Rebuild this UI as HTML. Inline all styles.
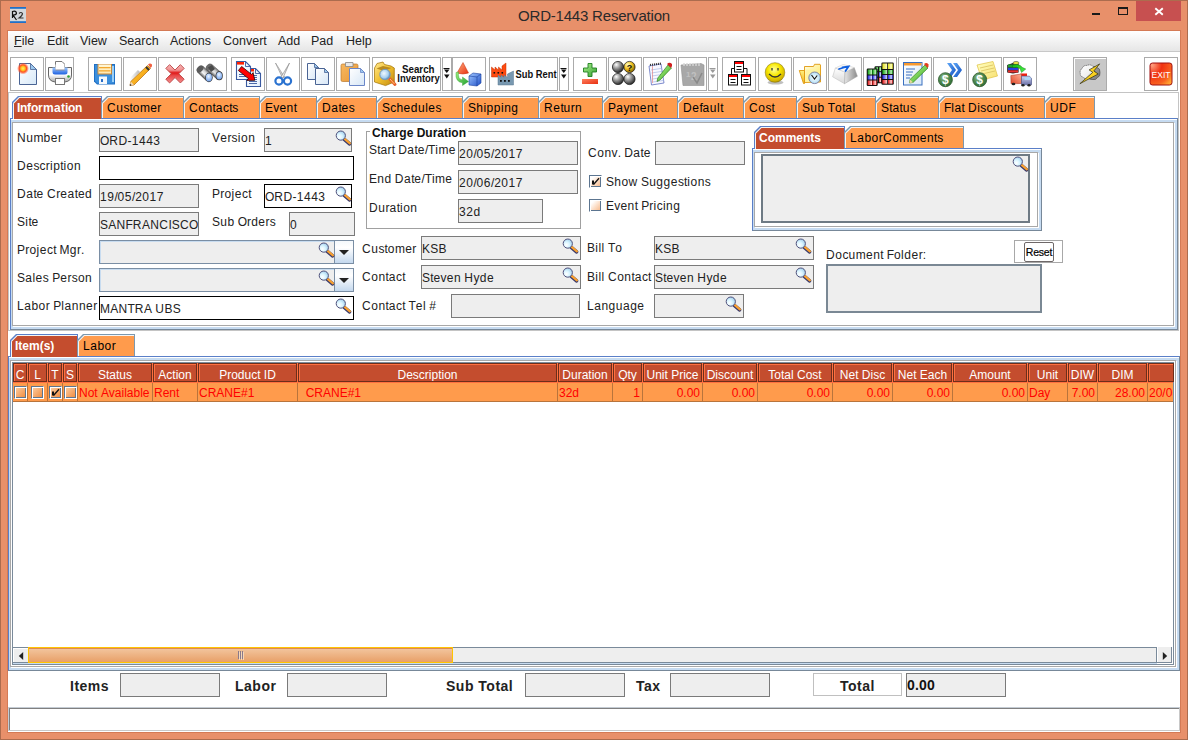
<!DOCTYPE html><html><head><meta charset="utf-8"><style>
*{margin:0;padding:0;box-sizing:border-box}
html,body{width:1188px;height:740px;overflow:hidden}
body{position:relative;background:#E8906A;font-family:"Liberation Sans",sans-serif;font-size:12px;color:#000}
.a{position:absolute}
svg{display:block}
.frame{left:0;top:0;width:1188px;height:740px;border:1px solid #AC6C4E}
.title{left:0;top:7px;width:1188px;text-align:center;font-size:15px;color:#2A2A2A;line-height:18px;letter-spacing:-0.2px}
.content{left:8px;top:31px;width:1172px;height:701px;background:#fff;box-shadow:0 0 0 1px #D47A55}
.menubar{left:8px;top:31px;width:1172px;height:21px;background:linear-gradient(#fff,#E6E6E6);border-bottom:1px solid #C8C8C8}
.mi{position:absolute;top:33px;font-size:12.5px;color:#222;line-height:16px}
.tb{position:absolute;top:57px;height:34px;border:1px solid #ABABAB;background:#fff}
.tb svg{position:absolute;left:-1px;top:-1px}
.l{position:absolute;font-size:12px;color:#222;line-height:14px;white-space:nowrap}
.f{position:absolute;border:1px solid #7A7A7A;background:#EEEEEE;font-size:12px;line-height:23px;padding-left:0px;color:#222;white-space:nowrap;overflow:hidden}
.fw{background:#fff;border-color:#000}
.fb{border-color:#7A8EA4;box-shadow:inset 1px 1px 0 #C8DCF0}
.tt{position:absolute;font-size:12px;line-height:14px;white-space:nowrap}
.th{position:absolute;top:363px;height:19px;background:#C44D2E;border:1px solid #6E2E1A;box-shadow:inset 1px 1px 0 #FF7040;color:#fff;font-size:12px;line-height:20px;padding-top:1px;text-align:center;white-space:nowrap;overflow:hidden}
.td{position:absolute;top:383px;height:18px;color:#FF0000;font-size:12px;line-height:20px;white-space:nowrap;overflow:hidden}
.cb{position:absolute;top:386px;width:13px;height:13px;border:1px solid #5C7590;border-right-color:#fff;border-bottom-color:#fff;box-shadow:inset 1px 1px 0 #fff,inset -1px -1px 0 #5C7590;background:linear-gradient(135deg,#FCD0A8,#F08838)}
.tot{position:absolute;font-weight:bold;font-size:13px;color:#222;line-height:16px;white-space:nowrap}
</style></head><body>
<div class="a frame"></div>
<div class="a title">ORD-1443 Reservation</div>
<div class="a" style="left:1136px;top:1px;width:45px;height:20px;background:#C75050"></div>
<svg class="a" style="left:0;top:0" width="1188" height="30"><rect x="1092" y="13" width="8" height="2" fill="#1A1A1A"/><rect x="1118.5" y="7.5" width="9" height="7" fill="none" stroke="#1A1A1A" stroke-width="1"/><rect x="1118" y="7" width="10" height="2" fill="#1A1A1A"/><path d="M1155.3 8.2 L1162.8 14.8 M1162.8 8.2 L1155.3 14.8" stroke="#fff" stroke-width="1.9"/></svg>
<svg class="a" style="left:10px;top:7px" width="16" height="16"><rect x="0" y="0" width="16" height="16" fill="#D4D8DC"/><rect x="0" y="0" width="16" height="1.8" fill="#2070C8"/><rect x="0" y="14.2" width="16" height="1.8" fill="#2070C8"/><path d="M2.5 4 V11 M2.5 4.5 Q6 3.5 6.5 6 Q6.5 8 3 8 L6.5 13" stroke="#111" stroke-width="1.2" fill="none"/><path d="M9 6.5 Q11 4.5 12.5 6.5 Q12.5 8.5 9 11 H13.5" stroke="#333" stroke-width="1.1" fill="none"/></svg>
<div class="a content"></div>
<div class="a menubar"></div>
<div class="mi" style="left:14px"><u>F</u>ile</div>
<div class="mi" style="left:47px">Edit</div>
<div class="mi" style="left:80px">View</div>
<div class="mi" style="left:119px">Search</div>
<div class="mi" style="left:170px">Actions</div>
<div class="mi" style="left:223px">Convert</div>
<div class="mi" style="left:278px">Add</div>
<div class="mi" style="left:311px">Pad</div>
<div class="mi" style="left:346px">Help</div>
<div class="tb" style="left:10px;width:34px;background:#fff"><svg width="34" height="34" viewBox="0 0 34 34"><defs><linearGradient id="g0" x1="0" y1="0" x2="1" y2="1"><stop offset="0" stop-color="#FFFFFF"/><stop offset="1" stop-color="#D6E8F8"/></linearGradient><radialGradient id="s0" cx="0.5" cy="0.5" r="0.5"><stop offset="0" stop-color="#FFF060"/><stop offset="0.35" stop-color="#FFC020"/><stop offset="0.6" stop-color="#FF5020"/><stop offset="1" stop-color="rgba(255,80,40,0)"/></radialGradient></defs><path d="M9.5 6.5 H20.5 L26.5 12.5 V27.5 H9.5 Z" fill="url(#g0)" stroke="#4A6494" stroke-width="1"/><path d="M20.5 6.5 V12.5 H26.5 Z" fill="#9CC8EE" stroke="#4A6494" stroke-width="0.8"/><circle cx="13" cy="11.5" r="6" fill="url(#s0)"/></svg></div>
<div class="tb" style="left:45px;width:29px;background:#fff"><svg width="29" height="34" viewBox="0 0 29 34"><defs><linearGradient id="p1" x1="0" y1="0" x2="0" y2="1"><stop offset="0" stop-color="#F4F4F4"/><stop offset="0.5" stop-color="#FFFFFF"/><stop offset="1" stop-color="#A8A8A8"/></linearGradient><linearGradient id="p2" x1="0" y1="0" x2="0" y2="1"><stop offset="0" stop-color="#9CC8FF"/><stop offset="1" stop-color="#1E60E0"/></linearGradient></defs><path d="M10.5 4.5 H17 L19.5 7 V13 H10.5 Z" fill="#fff" stroke="#777" stroke-width="1"/><path d="M3.5 10.5 H26.5 V18 Q26.5 24 20 25 H10 Q3.5 24 3.5 18 Z" fill="url(#p1)" stroke="#666" stroke-width="1"/><path d="M7.5 10.5 H22.5 V15 Q22.5 17.5 20 17.5 H10 Q7.5 17.5 7.5 15 Z" fill="url(#p2)"/><rect x="10.5" y="11" width="9" height="2.5" fill="#8A8A98"/><path d="M10.5 7.5 V12.5 H19.5 V7" fill="#fff"/><circle cx="23.5" cy="19.5" r="1.3" fill="#30A030"/><rect x="10.5" y="21.5" width="9" height="6" fill="#fff" stroke="#777" stroke-width="1"/></svg></div>
<div class="tb" style="left:88px;width:34px;background:#fff"><svg width="34" height="34" viewBox="0 0 34 34"><defs><linearGradient id="f2" x1="0" y1="0" x2="1" y2="0"><stop offset="0" stop-color="#2E80D0"/><stop offset="1" stop-color="#2070C0"/></linearGradient><linearGradient id="f2b" x1="0" y1="0" x2="0" y2="1"><stop offset="0" stop-color="#FFF8D8"/><stop offset="1" stop-color="#FFE8B0"/></linearGradient></defs><path d="M6 7 H27 V27.5 H9 L6 24.5 Z" fill="#1F6FC4"/><path d="M7 8 H26 V26.5 H9.5 L7 24 Z" fill="#3A8EDC"/><rect x="24" y="9" width="2" height="16" fill="#9AD0F8"/><rect x="9.5" y="7" width="14.5" height="10.5" fill="#C8883A"/><rect x="10.5" y="7.5" width="12.5" height="9" fill="url(#f2b)"/><rect x="11" y="10" width="11.5" height="1.3" fill="#F4A830"/><rect x="11" y="13.2" width="11.5" height="1.3" fill="#F4A830"/><rect x="11" y="19.5" width="8" height="7.5" fill="#F4F8FC"/><rect x="13" y="22" width="2" height="3" fill="#2A6EC8"/></svg></div>
<div class="tb" style="left:123px;width:34px;background:#fff"><svg width="34" height="34" viewBox="0 0 34 34"><defs><linearGradient id="pc" x1="0" y1="0" x2="1" y2="1"><stop offset="0" stop-color="#FFD040"/><stop offset="1" stop-color="#F09000"/></linearGradient><linearGradient id="sh3" x1="0" y1="0" x2="1" y2="0"><stop offset="0" stop-color="rgba(0,0,0,0)"/><stop offset="1" stop-color="rgba(0,0,0,0.25)"/></linearGradient></defs><path d="M7 27 L9 21 L16 14" stroke="url(#sh3)" stroke-width="3" fill="none"/><path d="M24.5 8.5 L27.5 11.5 L11 28 L7 28.5 L7.8 24.5 Z" fill="url(#pc)" stroke="#B06A10" stroke-width="0.7"/><path d="M7.8 24.5 L11 28 L7 28.5 Z" fill="#F0D8B8"/><path d="M7 28.5 L8 27.5" stroke="#333" stroke-width="1.2"/><path d="M23 10 L26 13" stroke="#333" stroke-width="2"/><path d="M25 7.5 Q27 5.5 29 7.5 Q29.5 9.5 27.5 11 Z" fill="#F06040"/></svg></div>
<div class="tb" style="left:158px;width:34px;background:#fff"><svg width="34" height="34" viewBox="0 0 34 34"><defs><linearGradient id="x4" x1="0" y1="0" x2="0" y2="1"><stop offset="0" stop-color="#F8B8B8"/><stop offset="0.3" stop-color="#F09090"/><stop offset="0.45" stop-color="#E01818"/><stop offset="0.6" stop-color="#E84848"/><stop offset="1" stop-color="#F49090"/></linearGradient></defs><path d="M8.5 11.5 L12 8 L17 13 L22 8 L25.5 11.5 L20.5 16.5 L25.5 21.5 L22 25 L17 20 L12 25 L8.5 21.5 L13.5 16.5 Z" fill="url(#x4)" stroke="#B84040" stroke-width="0.8" stroke-linejoin="round" transform="translate(17 16.8) scale(1.08) translate(-17 -16.5)"/></svg></div>
<div class="tb" style="left:193px;width:34px;background:#fff"><svg width="34" height="34" viewBox="0 0 34 34"><defs><linearGradient id="b5a" gradientUnits="userSpaceOnUse" x1="9.76" y1="9.1" x2="4.24" y2="14.9"><stop offset="0" stop-color="#6A6A6A"/><stop offset="0.3" stop-color="#D8D8D8"/><stop offset="0.6" stop-color="#F4F4F4"/><stop offset="1" stop-color="#505050"/></linearGradient><linearGradient id="b5b" gradientUnits="userSpaceOnUse" x1="18.5" y1="7.15" x2="13.5" y2="12.85"><stop offset="0" stop-color="#6A6A6A"/><stop offset="0.3" stop-color="#C8C8C8"/><stop offset="0.6" stop-color="#E8E8E8"/><stop offset="1" stop-color="#505050"/></linearGradient><radialGradient id="l5" cx="0.45" cy="0.35" r="0.7"><stop offset="0" stop-color="#F0F8FF"/><stop offset="0.5" stop-color="#A8C8F8"/><stop offset="1" stop-color="#6A98E0"/></radialGradient></defs><path d="M13.5 12.85 L18.5 7.15 L28.5 15.95 L23.5 21.65 Z" fill="url(#b5b)" stroke="#444" stroke-width="0.5"/><ellipse cx="16" cy="10" rx="2.6" ry="3.8" transform="rotate(41 16 10)" fill="#6A6A6A"/><path d="M15 10.5 L19 8 L22 12 L18 15 Z" fill="#4A4A4A"/><ellipse cx="26.2" cy="18.8" rx="3.6" ry="4.5" fill="#333"/><ellipse cx="26.2" cy="18.8" rx="2.9" ry="3.8" fill="url(#l5)"/><path d="M4.24 14.9 L9.76 9.1 L18.66 17.6 L13.14 23.4 Z" fill="url(#b5a)" stroke="#444" stroke-width="0.5"/><ellipse cx="7" cy="12" rx="2.8" ry="4" transform="rotate(44 7 12)" fill="#5A5A5A"/><ellipse cx="15.9" cy="20.5" rx="3.8" ry="4.7" fill="#333"/><ellipse cx="15.9" cy="20.5" rx="3.1" ry="4" fill="url(#l5)"/></svg></div>
<div class="tb" style="left:231px;width:34px;background:#fff"><svg width="34" height="34" viewBox="0 0 34 34"><defs><linearGradient id="g6" x1="0" y1="0" x2="1" y2="1"><stop offset="0" stop-color="#FFFFFF"/><stop offset="1" stop-color="#E4F0FC"/></linearGradient></defs><path d="M15.5 11.5 H24.5 L29.5 16.5 V29.5 H15.5 Z" fill="url(#g6)" stroke="#3A5AA0" stroke-width="1.1"/><path d="M24.5 11.5 V16.5 H29.5" fill="none" stroke="#3A5AA0" stroke-width="0.9"/><rect x="19.5" y="12" width="3.5" height="2.5" fill="#FF2000"/><path d="M18 18.5 H26 M18 20.5 H26 M18 22.5 H26 M18 24.5 H26 M18 26.5 H26" stroke="#3A5AA0" stroke-width="0.9"/><path d="M5.5 4.5 H14.5 L19.5 9.5 V22.5 H5.5 Z" fill="url(#g6)" stroke="#3A5AA0" stroke-width="1.1"/><path d="M14.5 4.5 V9.5 H19.5" fill="none" stroke="#3A5AA0" stroke-width="0.9"/><rect x="6" y="5" width="7" height="2.6" fill="#FF2000"/><path d="M8 17.5 H15 M8 19.5 H15" stroke="#3A5AA0" stroke-width="0.9"/><path d="M10.63 9.47 L20.63 17.47 L22.13 15.6 L23.8 23.3 L15.88 23.4 L17.37 21.53 L7.37 13.53 Z" fill="#FF0000" stroke="#200000" stroke-width="0.8" stroke-linejoin="round"/></svg></div>
<div class="tb" style="left:266px;width:34px;background:#fff"><svg width="34" height="34" viewBox="0 0 34 34"><defs><linearGradient id="s7" x1="0" y1="0" x2="1" y2="0"><stop offset="0" stop-color="#FFFFFF"/><stop offset="1" stop-color="#B8B8B8"/></linearGradient></defs><path d="M9.5 6 L18.5 20 L16.5 21 Z" fill="url(#s7)" stroke="#888" stroke-width="0.6"/><path d="M23.5 6 L15 20 L17 21 Z" fill="url(#s7)" stroke="#888" stroke-width="0.6"/><circle cx="13" cy="24" r="3.6" fill="none" stroke="#2A72D0" stroke-width="2.2"/><circle cx="21.5" cy="24" r="3.6" fill="none" stroke="#2A72D0" stroke-width="2.2"/></svg></div>
<div class="tb" style="left:301px;width:34px;background:#fff"><svg width="34" height="34" viewBox="0 0 34 34"><defs><linearGradient id="g8" x1="0" y1="0" x2="1" y2="1"><stop offset="0" stop-color="#FFFFFF"/><stop offset="1" stop-color="#D6E6F6"/></linearGradient></defs><path d="M6.5 6.5 H13.5 L17.5 10.5 V22.5 H6.5 Z" fill="url(#g8)" stroke="#4A6494" stroke-width="1"/><path d="M13.5 6.5 V10.5 H17.5 Z" fill="#9CC8EE" stroke="#4A6494" stroke-width="0.8"/><path d="M14.5 11.5 H23.5 L27.5 15.5 V27.5 H14.5 Z" fill="url(#g8)" stroke="#4A6494" stroke-width="1"/><path d="M23.5 11.5 V15.5 H27.5 Z" fill="#9CC8EE" stroke="#4A6494" stroke-width="0.8"/></svg></div>
<div class="tb" style="left:336px;width:34px;background:#fff"><svg width="34" height="34" viewBox="0 0 34 34"><defs><linearGradient id="g9" x1="0" y1="0" x2="1" y2="1"><stop offset="0" stop-color="#FFFFFF"/><stop offset="1" stop-color="#D6E6F6"/></linearGradient><linearGradient id="c9" x1="0" y1="0" x2="1" y2="1"><stop offset="0" stop-color="#F8B860"/><stop offset="1" stop-color="#E89838"/></linearGradient></defs><rect x="5" y="7" width="17" height="17.5" rx="1.5" fill="url(#c9)" stroke="#B87830" stroke-width="0.7"/><path d="M9.5 5.5 H17 V9.5 H9.5 Z" fill="#E8E8E8" stroke="#888" stroke-width="0.8"/><path d="M13.5 11.5 H24.5 L28.5 15.5 V28.5 H13.5 Z" fill="url(#g9)" stroke="#6A86C8" stroke-width="1"/><path d="M24.5 11.5 V15.5 H28.5 Z" fill="#9CC8EE" stroke="#6A86C8" stroke-width="0.8"/></svg></div>
<div class="tb" style="left:372px;width:69px;background:#fff"><svg width="69" height="34" viewBox="0 0 69 34"><defs><linearGradient id="bx" x1="0" y1="0" x2="1" y2="1"><stop offset="0" stop-color="#FFE890"/><stop offset="0.5" stop-color="#F0C030"/><stop offset="1" stop-color="#C08810"/></linearGradient><radialGradient id="ln" cx="0.4" cy="0.4" r="0.6"><stop offset="0" stop-color="#F0F8FF"/><stop offset="0.7" stop-color="#A8D0F0"/><stop offset="1" stop-color="#5A90C8"/></radialGradient></defs><path d="M2.5 11 L5 6.5 L11 5 L12.5 7.5 L19 9 L22.3 11 V25 L13.5 28.6 L2.5 25 Z" fill="url(#bx)" stroke="#A07000" stroke-width="0.7"/><path d="M4.5 11.5 L11 9 L19.5 11 L12 14 Z" fill="#B88A20"/><path d="M17.5 21.5 L23 27.5" stroke="#E86030" stroke-width="3" stroke-linecap="round"/><path d="M18 22 L22.5 27" stroke="#FFD060" stroke-width="1" /><circle cx="13" cy="17.5" r="5.2" fill="url(#ln)" stroke="#7A9AB8" stroke-width="1"/><text x="30" y="15.5" font-family="Liberation Sans" font-weight="bold" font-size="10" fill="#111" textLength="32.5" lengthAdjust="spacingAndGlyphs">Search</text><text x="25.3" y="25" font-family="Liberation Sans" font-weight="bold" font-size="10" fill="#111" textLength="42.5" lengthAdjust="spacingAndGlyphs">Inventory</text></svg></div>
<div class="tb" style="left:442px;width:10px;background:#fff"><svg width="10" height="34" viewBox="0 0 10 34"><path d="M1.5 11.5 H7.5" stroke="#111" stroke-width="1"/><path d="M2 12.5 H7.5 L4.75 16 Z" fill="#111"/><path d="M2 17.5 H7.5 L4.75 21.5 Z" fill="#111"/></svg></div>
<div class="tb" style="left:452px;width:34px;background:#fff"><svg width="34" height="34" viewBox="0 0 34 34"><defs><linearGradient id="r12" x1="0" y1="0" x2="1" y2="1"><stop offset="0" stop-color="#FFB080"/><stop offset="1" stop-color="#E83010"/></linearGradient><linearGradient id="g12" x1="0" y1="0" x2="1" y2="1"><stop offset="0" stop-color="#A0F080"/><stop offset="1" stop-color="#20A030"/></linearGradient><linearGradient id="c12" x1="0" y1="0" x2="1" y2="1"><stop offset="0" stop-color="#A0C8FF"/><stop offset="1" stop-color="#2050C8"/></linearGradient></defs><path d="M11 5.5 L16.5 16 Q11 18 5 16 Z" fill="url(#r12)" stroke="#C83010" stroke-width="0.5"/><path d="M6.5 15 Q5.5 22 10.5 23 V20 L16.5 24.5 L10.5 28.5 V25.8 Q3 25 4 15.5 Z" fill="url(#g12)" stroke="#30A030" stroke-width="0.4"/><path d="M17 19 L21 16 L29 17 L29 26 L25 29 L17 28 Z" fill="url(#c12)" stroke="#1A40A0" stroke-width="0.6"/><path d="M17 19 L25 20 L29 17 M25 20 V29" stroke="#1A40A0" stroke-width="0.6" fill="none"/></svg></div>
<div class="tb" style="left:489px;width:69px;background:#fff"><svg width="69" height="34" viewBox="0 0 69 34"><path d="M2.5 10 L6 13 V10 L9.5 13 V10 L13 13 V9 L17 6 V20 H2.5 Z" fill="#FF4A10" stroke="#C03000" stroke-width="0.5"/><rect x="4.5" y="15" width="1.6" height="1.6" fill="#111"/><rect x="8.5" y="15" width="1.6" height="1.6" fill="#111"/><rect x="12.5" y="15" width="1.6" height="1.6" fill="#111"/><path d="M9 18 L12 20.5 V18 L15 20.5 V18 L18.5 20.5 V17 L24.5 14 V28 H9 Z" fill="#7898B0" stroke="#5A7890" stroke-width="0.5"/><rect x="11" y="23" width="1.8" height="1.8" fill="#111"/><rect x="15" y="23" width="1.8" height="1.8" fill="#111"/><rect x="19" y="23" width="1.8" height="1.8" fill="#111"/><text x="26.5" y="21" font-family="Liberation Sans" font-weight="bold" font-size="10" fill="#111" textLength="41" lengthAdjust="spacingAndGlyphs">Sub Rent</text></svg></div>
<div class="tb" style="left:559px;width:10px;background:#fff"><svg width="10" height="34" viewBox="0 0 10 34"><path d="M1.5 11.5 H7.5" stroke="#111" stroke-width="1"/><path d="M2 12.5 H7.5 L4.75 16 Z" fill="#111"/><path d="M2 17.5 H7.5 L4.75 21.5 Z" fill="#111"/></svg></div>
<div class="tb" style="left:573px;width:34px;background:#fff"><svg width="34" height="34" viewBox="0 0 34 34"><defs><linearGradient id="pl" x1="0" y1="0" x2="1" y2="1"><stop offset="0" stop-color="#B0F090"/><stop offset="1" stop-color="#30A030"/></linearGradient><linearGradient id="mn" x1="0" y1="0" x2="1" y2="1"><stop offset="0" stop-color="#FF8060"/><stop offset="1" stop-color="#E83010"/></linearGradient></defs><path d="M15 6.5 H19 V11 H23.5 V15 H19 V19.5 H15 V15 H10.5 V11 H15 Z" fill="url(#pl)" stroke="#208020" stroke-width="0.9"/><rect x="9" y="22" width="16" height="5" fill="url(#mn)"/></svg></div>
<div class="tb" style="left:608px;width:34px;background:#fff"><svg width="34" height="34" viewBox="0 0 34 34"><defs><radialGradient id="bl" cx="0.35" cy="0.3" r="0.75"><stop offset="0" stop-color="#FFFFFF"/><stop offset="0.4" stop-color="#A0A0A0"/><stop offset="1" stop-color="#202020"/></radialGradient><radialGradient id="by" cx="0.35" cy="0.3" r="0.75"><stop offset="0" stop-color="#FFFFC0"/><stop offset="0.5" stop-color="#F0C020"/><stop offset="1" stop-color="#806000"/></radialGradient></defs><circle cx="10" cy="10" r="5.6" fill="url(#bl)" stroke="#111" stroke-width="0.7"/><circle cx="21.5" cy="10" r="5.6" fill="url(#by)" stroke="#111" stroke-width="0.7"/><text x="21.5" y="13.5" text-anchor="middle" font-family="Liberation Sans" font-weight="bold" font-size="9" fill="#111">?</text><circle cx="10" cy="22" r="5.6" fill="url(#bl)" stroke="#111" stroke-width="0.7"/><circle cx="21.5" cy="22" r="5.6" fill="url(#bl)" stroke="#111" stroke-width="0.7"/></svg></div>
<div class="tb" style="left:643px;width:34px;background:#fff"><svg width="34" height="34" viewBox="0 0 34 34"><defs><linearGradient id="gp" x1="0" y1="0" x2="1" y2="1"><stop offset="0" stop-color="#C0FF90"/><stop offset="1" stop-color="#30A020"/></linearGradient></defs><path d="M6 9 L18 7 L21 26 L8.5 28 Z" fill="#F8F8FF" stroke="#6070C0" stroke-width="0.8"/><path d="M8 13 L19 11.3 M8.5 16 L19.5 14.3 M9 19 L20 17.3 M9.5 22 L20.5 20.3 M10 25 L21 23.3" stroke="#9AB0E0" stroke-width="0.6"/><path d="M9.5 9 V26" stroke="#E07070" stroke-width="0.6"/><path d="M7 8 L18 6.5" stroke="#333" stroke-width="2" stroke-dasharray="1 1"/><path d="M25 8 L28.5 11 L17 23 L14 24.5 L14.8 21 Z" fill="url(#gp)" stroke="#207010" stroke-width="0.6"/><path d="M24 7 Q26.5 4.5 29 7 Q29.5 9.5 28 11 Z" fill="#D02020"/></svg></div>
<div class="tb" style="left:678px;width:29px;background:#fff"><svg width="29" height="34" viewBox="0 0 29 34"><path d="M3 8 L23 6.5 L26 8 V28.5 L5 28.5 Z" fill="#A8A8A8" stroke="#909090" stroke-width="0.6"/><path d="M6 6 V9 M9 6 V9 M12 6 V9 M15 6 V9 M18 6 V9 M21 6 V9" stroke="#D8D8D8" stroke-width="1.4"/><text x="8" y="20" font-family="Liberation Sans" font-weight="bold" font-size="8" fill="#C0C0C0">1</text><text x="13" y="23" font-family="Liberation Sans" font-weight="bold" font-size="10" fill="#C0C0C0">2</text><path d="M15 20 L19 26 L24 16" stroke="#8A8A8A" stroke-width="1.6" fill="none"/></svg></div>
<div class="tb" style="left:708px;width:10px;background:#fff"><svg width="10" height="34" viewBox="0 0 10 34"><path d="M1.5 11.5 H7.5" stroke="#9A9A9A" stroke-width="1"/><path d="M2 12.5 H7.5 L4.75 16 Z" fill="#9A9A9A"/><path d="M2 17.5 H7.5 L4.75 21.5 Z" fill="#9A9A9A"/></svg></div>
<div class="tb" style="left:722px;width:34px;background:#fff"><svg width="34" height="34" viewBox="0 0 34 34"><path d="M9.5 18 V11.5 H25 V18" fill="none" stroke="#111" stroke-width="1"/><rect x="12.5" y="4.5" width="9" height="10.5" fill="#fff" stroke="#111" stroke-width="1"/><rect x="13" y="5" width="8" height="2" fill="#F00"/><path d="M14.5 9.5 H19.5 M14.5 12.5 H19.5" stroke="#111" stroke-width="1"/><rect x="6.5" y="17.5" width="9" height="10.5" fill="#fff" stroke="#111" stroke-width="1"/><rect x="7" y="18" width="8" height="2" fill="#F00"/><path d="M8.5 22.5 H13.5 M8.5 25.5 H13.5" stroke="#111" stroke-width="1"/><rect x="19.5" y="17.5" width="9" height="10.5" fill="#fff" stroke="#111" stroke-width="1"/><rect x="20" y="18" width="8" height="2" fill="#F00"/><path d="M21.5 22.5 H26.5 M21.5 25.5 H26.5" stroke="#111" stroke-width="1"/></svg></div>
<div class="tb" style="left:758px;width:34px;background:#fff"><svg width="34" height="34" viewBox="0 0 34 34"><defs><radialGradient id="sm" cx="0.45" cy="0.35" r="0.7"><stop offset="0" stop-color="#FFFFA0"/><stop offset="0.45" stop-color="#F8E800"/><stop offset="0.85" stop-color="#D0B000"/><stop offset="1" stop-color="#907000"/></radialGradient></defs><ellipse cx="17.5" cy="25.5" rx="8" ry="2" fill="rgba(0,0,0,0.25)"/><circle cx="17" cy="15.5" r="9.8" fill="url(#sm)" stroke="#8A7A10" stroke-width="0.6"/><path d="M14 11 V13.5 M20 11 V13.5" stroke="#333" stroke-width="1.3"/><path d="M11 17 Q17 23 23 17" stroke="#333" stroke-width="1.3" fill="none"/></svg></div>
<div class="tb" style="left:793px;width:34px;background:#fff"><svg width="34" height="34" viewBox="0 0 34 34"><defs><linearGradient id="fd" x1="0" y1="0" x2="1" y2="1"><stop offset="0" stop-color="#FFFCE0"/><stop offset="1" stop-color="#FFE860"/></linearGradient><linearGradient id="fd2" x1="0" y1="0" x2="0" y2="1"><stop offset="0" stop-color="#FFF080"/><stop offset="1" stop-color="#F0B820"/></linearGradient><radialGradient id="ck" cx="0.5" cy="0.5" r="0.6"><stop offset="0" stop-color="#FFFFFF"/><stop offset="0.6" stop-color="#C8E8F8"/><stop offset="1" stop-color="#90C8F0"/></radialGradient></defs><path d="M11.5 25.5 V9.5 H20.5 L21.5 7.3 H27 L27.5 8 V25 Z" fill="url(#fd)" stroke="#E09810" stroke-width="0.9"/><path d="M6.3 13.5 H11.5 V26.5 H10.5 Z" fill="url(#fd2)" stroke="#E09810" stroke-width="0.9"/><path d="M12.5 12.5 H22 L24 15 V25 H12.5 Z" fill="#FFF4A0" opacity="0.8"/><circle cx="21.6" cy="20.8" r="5.8" fill="url(#ck)" stroke="#7A7A9A" stroke-width="0.9"/><path d="M18.5 18 L21.5 22 L24.2 18.5" stroke="#111" stroke-width="1.1" fill="none"/></svg></div>
<div class="tb" style="left:828px;width:34px;background:#fff"><svg width="34" height="34" viewBox="0 0 34 34"><defs><linearGradient id="kyl" x1="0" y1="0" x2="0" y2="1"><stop offset="0" stop-color="#FFFFFF"/><stop offset="1" stop-color="#D8D8D8"/></linearGradient><linearGradient id="kyr" x1="0" y1="0" x2="1" y2="0"><stop offset="0" stop-color="#E8E8E8"/><stop offset="1" stop-color="#8A8A8A"/></linearGradient></defs><path d="M7.4 11 L4.6 19.8 L16.5 26.7 L17 15.2 Z" fill="url(#kyl)" stroke="#B8B8B8" stroke-width="0.5"/><path d="M17 15.2 L16.5 26.7 L29.4 19.3 L26.2 10.6 Z" fill="url(#kyr)" stroke="#A0A0A0" stroke-width="0.5"/><path d="M7.4 11 L15.2 7.4 L26.2 10.6 L17 15.2 Z" fill="#F8F8F8" stroke="#C8C8C8" stroke-width="0.5"/><path d="M11 12 L16 10.5 M14.5 10.5 L20.5 9.5 L17.5 14" stroke="#1060E0" stroke-width="1.8" fill="none" stroke-linecap="round"/></svg></div>
<div class="tb" style="left:863px;width:34px;background:#fff"><svg width="34" height="34" viewBox="0 0 34 34"><defs><linearGradient id="cug" x1="0" y1="0" x2="1" y2="0"><stop offset="0" stop-color="#10A010"/><stop offset="0.45" stop-color="#C0F0C0"/><stop offset="0.5" stop-color="#111"/><stop offset="0.55" stop-color="#10A010"/><stop offset="0.85" stop-color="#C0F0C0"/><stop offset="1" stop-color="#10A010"/></linearGradient><linearGradient id="cub" x1="0" y1="0" x2="1" y2="0"><stop offset="0" stop-color="#2020E0"/><stop offset="0.45" stop-color="#D0D8FF"/><stop offset="0.5" stop-color="#111"/><stop offset="0.55" stop-color="#2020E0"/><stop offset="0.85" stop-color="#D0D8FF"/><stop offset="1" stop-color="#2020E0"/></linearGradient><linearGradient id="cur" x1="0" y1="0" x2="1" y2="0"><stop offset="0" stop-color="#E01818"/><stop offset="0.45" stop-color="#FFD0D0"/><stop offset="0.5" stop-color="#111"/><stop offset="0.55" stop-color="#E01818"/><stop offset="0.85" stop-color="#FFD0D0"/><stop offset="1" stop-color="#E01818"/></linearGradient><linearGradient id="cuy" x1="0" y1="0" x2="1" y2="0"><stop offset="0" stop-color="#E0E020"/><stop offset="0.45" stop-color="#FFFFC0"/><stop offset="0.5" stop-color="#111"/><stop offset="0.55" stop-color="#E0E020"/><stop offset="0.85" stop-color="#FFFFC0"/><stop offset="1" stop-color="#E0E020"/></linearGradient></defs><rect x="11.5" y="9.2" width="8.0" height="17.0" rx="1.2" fill="#111"/><rect x="12.5" y="10.2" width="6.0" height="4" fill="url(#cug)"/><rect x="12.5" y="15.2" width="6.0" height="4.5" fill="url(#cub)"/><rect x="12.5" y="20.7" width="6.0" height="4.5" fill="url(#cur)"/><rect x="3.7" y="11.5" width="11.0" height="17.5" rx="1.2" fill="#111"/><rect x="4.7" y="12.5" width="9.0" height="5" fill="url(#cug)"/><rect x="4.7" y="18.5" width="9.0" height="4" fill="url(#cub)"/><rect x="4.7" y="23.5" width="9.0" height="4.5" fill="url(#cur)"/><rect x="18.4" y="5.5" width="12.400000000000002" height="22.2" rx="1.2" fill="#111"/><rect x="19.4" y="6.5" width="10.400000000000002" height="5.5" fill="url(#cuy)"/><rect x="19.4" y="13.0" width="10.400000000000002" height="4" fill="url(#cug)"/><rect x="19.4" y="18.0" width="10.400000000000002" height="4" fill="url(#cub)"/><rect x="19.4" y="23.0" width="10.400000000000002" height="3.7" fill="url(#cur)"/></svg></div>
<div class="tb" style="left:898px;width:34px;background:#fff"><svg width="34" height="34" viewBox="0 0 34 34"><defs><linearGradient id="gp2" x1="0" y1="0" x2="1" y2="1"><stop offset="0" stop-color="#C0FF90"/><stop offset="1" stop-color="#30A020"/></linearGradient><linearGradient id="fm" x1="0" y1="0" x2="1" y2="1"><stop offset="0" stop-color="#FFFFFF"/><stop offset="1" stop-color="#D8E8F8"/></linearGradient></defs><rect x="5.5" y="5.5" width="18.5" height="22.5" fill="url(#fm)" stroke="#3A70C0" stroke-width="1"/><rect x="6" y="6" width="17.5" height="2.5" fill="#F89A30"/><path d="M8 12 H17 M8 15 H15 M8 18 H14 M8 21 H12" stroke="#3A70C0" stroke-width="1"/><path d="M27 8 L30 11 L15 25.5 L11.5 26 L12 22.5 Z" fill="url(#gp2)" stroke="#207010" stroke-width="0.6"/><path d="M12 22.5 L15 25.5 L11.5 26 Z" fill="#F0D8A0"/><path d="M26 7 Q28.5 5 30.5 7.5 Q31 9.5 29.5 11 Z" fill="#E04020"/></svg></div>
<div class="tb" style="left:933px;width:34px;background:#fff"><svg width="34" height="34" viewBox="0 0 34 34"><defs><radialGradient id="dg" cx="0.4" cy="0.35" r="0.7"><stop offset="0" stop-color="#9CC89C"/><stop offset="0.5" stop-color="#4E8A50"/><stop offset="1" stop-color="#2E6A32"/></radialGradient><linearGradient id="ch" x1="0" y1="0" x2="1" y2="1"><stop offset="0" stop-color="#60A8F8"/><stop offset="1" stop-color="#1050C0"/></linearGradient></defs><path d="M14 6 L18 6 L23 13 L18 20 L14 20 L19 13 Z" fill="url(#ch)"/><path d="M20 6 L24 6 L29 13 L24 20 L20 20 L25 13 Z" fill="url(#ch)"/><circle cx="12.4" cy="22.7" r="7" fill="url(#dg)" stroke="#2E5A30" stroke-width="0.8"/><text x="12.4" y="27.2" text-anchor="middle" font-family="Liberation Sans" font-weight="bold" font-size="12" fill="#fff">$</text></svg></div>
<div class="tb" style="left:968px;width:34px;background:#fff"><svg width="34" height="34" viewBox="0 0 34 34"><defs><radialGradient id="dg" cx="0.4" cy="0.35" r="0.7"><stop offset="0" stop-color="#9CC89C"/><stop offset="0.5" stop-color="#4E8A50"/><stop offset="1" stop-color="#2E6A32"/></radialGradient><linearGradient id="nt" x1="0" y1="0" x2="1" y2="1"><stop offset="0" stop-color="#FFFFC0"/><stop offset="1" stop-color="#F8E070"/></linearGradient></defs><path d="M9 8 L25 4.5 L29.5 19 L14 23 Z" fill="url(#nt)" stroke="#E0C040" stroke-width="0.7"/><path d="M12 11 L25 8 M13 14 L26 11 M14 17 L27 14" stroke="#D8C060" stroke-width="0.8"/><circle cx="11.7" cy="22.7" r="7" fill="url(#dg)" stroke="#2E5A30" stroke-width="0.8"/><text x="11.7" y="27.2" text-anchor="middle" font-family="Liberation Sans" font-weight="bold" font-size="12" fill="#fff">$</text></svg></div>
<div class="tb" style="left:1003px;width:34px;background:#fff"><svg width="34" height="34" viewBox="0 0 34 34"><defs><linearGradient id="tr" x1="1" y1="0" x2="0" y2="1"><stop offset="0" stop-color="#FFB098"/><stop offset="1" stop-color="#E04828"/></linearGradient><linearGradient id="cb" x1="0" y1="0" x2="0" y2="1"><stop offset="0" stop-color="#D0D4F0"/><stop offset="1" stop-color="#6A70A8"/></linearGradient><linearGradient id="ar" x1="0" y1="0" x2="1" y2="1"><stop offset="0" stop-color="#10C010"/><stop offset="1" stop-color="#50F050"/></linearGradient></defs><path d="M4.2 8 L10 6 L15.6 7 V15.5 L10 16.5 L4.2 15.5 Z" fill="#1A1A1A"/><rect x="5" y="7.5" width="10" height="3" fill="#20A030"/><rect x="5" y="10.8" width="10" height="2.2" fill="#2A40E0"/><rect x="5" y="13.3" width="10" height="2.2" fill="#E83030"/><ellipse cx="13" cy="6" rx="3" ry="1.6" fill="#E8E040" stroke="#333" stroke-width="0.5"/><path d="M9 8.5 Q16 6 19.5 10.5 L22.8 12 L18.5 15.5 L17 11.5 Q14 9.5 10 10.5 Z" fill="url(#ar)" stroke="#0A6A0A" stroke-width="0.4"/><rect x="17.5" y="16.5" width="6.5" height="2.5" fill="#F02010"/><path d="M7.8 18.5 L18.5 17 V26.5 L8 26.8 Z" fill="url(#tr)" stroke="#A03020" stroke-width="0.5"/><path d="M18.5 19.2 H26.5 L28.5 21.5 V27.8 H18.5 Z" fill="url(#cb)" stroke="#404880" stroke-width="0.6"/><rect x="21.5" y="20.3" width="6" height="2.6" fill="#A8D8F8"/><ellipse cx="10.5" cy="27" rx="1.8" ry="1.3" fill="#222"/><ellipse cx="20" cy="28.3" rx="1.6" ry="1.3" fill="#222"/><ellipse cx="26" cy="28.3" rx="1.6" ry="1.3" fill="#222"/></svg></div>
<div class="tb" style="left:1073px;width:34px;background:#C8C8C8"><svg width="34" height="34" viewBox="0 0 34 34"><defs><linearGradient id="cl" x1="0" y1="0" x2="1" y2="1"><stop offset="0" stop-color="#FFFFFF"/><stop offset="0.6" stop-color="#F0F0F0"/><stop offset="1" stop-color="#A8A8A8"/></linearGradient><linearGradient id="cl2" x1="0" y1="0" x2="1" y2="1"><stop offset="0" stop-color="#B8B8B8"/><stop offset="1" stop-color="#707070"/></linearGradient></defs><path d="M1.5 33 V1.5 H33" stroke="#fff" stroke-width="1" fill="none"/><path d="M18 11 Q21 8.5 24 10.5 Q27.5 11.5 27 15.5 Q27.5 19.5 24.5 20.5 Q23 23.5 19 22.5 Q16 23 15 20 Z" fill="url(#cl2)" stroke="#444" stroke-width="0.6"/><path d="M9 11.5 Q10.5 8 14 8.5 Q17 7 19.5 9 Q22 9.5 21.5 13 Q22.5 16 20.5 18.5 Q19.5 21.5 15.5 21.5 Q12 22.5 10 20 Q7 19.5 7.3 16.5 Q6.5 13.5 9 11.5 Z" fill="url(#cl)" stroke="#333" stroke-width="0.6" stroke-dasharray="1.2 0.6"/><path d="M26.7 6.9 L16.1 12.9 L19.8 15.3 L6.9 26.7 L25.2 17 L20.8 14 Z" fill="#F8D020" stroke="#2A2A10" stroke-width="0.7" stroke-linejoin="round"/></svg></div>
<div class="tb" style="left:1144px;width:34px;background:#fff"><svg width="34" height="34" viewBox="0 0 34 34"><defs><radialGradient id="ex" cx="0.1" cy="0.1" r="1.1"><stop offset="0" stop-color="#FFA080"/><stop offset="0.4" stop-color="#F03010"/><stop offset="0.8" stop-color="#F86020"/><stop offset="1" stop-color="#FFA030"/></radialGradient></defs><rect x="6" y="6" width="22" height="22" rx="2.5" fill="url(#ex)" stroke="#A01010" stroke-width="1"/><text x="17" y="20.8" text-anchor="middle" font-family="Liberation Sans" font-size="9.5" fill="#fff" textLength="19" lengthAdjust="spacingAndGlyphs">EXIT</text></svg></div>
<div class="a" style="left:8px;top:92px;width:1171px;height:239px;border:1px solid #C4C4C4"></div>
<div class="a" style="left:10px;top:118px;width:1168px;height:212px;border:1px solid #778899;border-top-color:#5A7FC8;border-left-color:#5A7FC8;background:#C6DBF1"></div><div class="a" style="left:11px;top:119px;width:1166px;height:1px;background:#fff"></div><div class="a" style="left:12px;top:122px;width:1162px;height:204px;border:1px solid #A8A8A8;background:#fff;box-shadow:1px 1px 0 #fff"></div>
<svg class="a" style="left:0;top:0" width="1188" height="130"><path d="M12 102 L18 96 H102 V118 H12 Z" fill="#5A7FC8"/><path d="M13 103 L19 97 H101 V119 H13 Z" fill="#F4F4F4"/><path d="M14 103.5 L19.5 98 H101 V119 H14 Z" fill="#C44D2E"/><path d="M101 102 L107 96 H184 V118 H101 Z" fill="#7C98AE"/><path d="M102 103 L108 97 H183 V118 H102 Z" fill="#F4F4F4"/><path d="M103 103.5 L108.5 98 H183 V118 H103 Z" fill="#FF9B4C"/><path d="M183 102 L189 96 H260 V118 H183 Z" fill="#7C98AE"/><path d="M184 103 L190 97 H259 V118 H184 Z" fill="#F4F4F4"/><path d="M185 103.5 L190.5 98 H259 V118 H185 Z" fill="#FF9B4C"/><path d="M259 102 L265 96 H317 V118 H259 Z" fill="#7C98AE"/><path d="M260 103 L266 97 H316 V118 H260 Z" fill="#F4F4F4"/><path d="M261 103.5 L266.5 98 H316 V118 H261 Z" fill="#FF9B4C"/><path d="M316 102 L322 96 H377 V118 H316 Z" fill="#7C98AE"/><path d="M317 103 L323 97 H376 V118 H317 Z" fill="#F4F4F4"/><path d="M318 103.5 L323.5 98 H376 V118 H318 Z" fill="#FF9B4C"/><path d="M376 102 L382 96 H463 V118 H376 Z" fill="#7C98AE"/><path d="M377 103 L383 97 H462 V118 H377 Z" fill="#F4F4F4"/><path d="M378 103.5 L383.5 98 H462 V118 H378 Z" fill="#FF9B4C"/><path d="M462 102 L468 96 H539 V118 H462 Z" fill="#7C98AE"/><path d="M463 103 L469 97 H538 V118 H463 Z" fill="#F4F4F4"/><path d="M464 103.5 L469.5 98 H538 V118 H464 Z" fill="#FF9B4C"/><path d="M538 102 L544 96 H603 V118 H538 Z" fill="#7C98AE"/><path d="M539 103 L545 97 H602 V118 H539 Z" fill="#F4F4F4"/><path d="M540 103.5 L545.5 98 H602 V118 H540 Z" fill="#FF9B4C"/><path d="M602 102 L608 96 H678 V118 H602 Z" fill="#7C98AE"/><path d="M603 103 L609 97 H677 V118 H603 Z" fill="#F4F4F4"/><path d="M604 103.5 L609.5 98 H677 V118 H604 Z" fill="#FF9B4C"/><path d="M677 102 L683 96 H744 V118 H677 Z" fill="#7C98AE"/><path d="M678 103 L684 97 H743 V118 H678 Z" fill="#F4F4F4"/><path d="M679 103.5 L684.5 98 H743 V118 H679 Z" fill="#FF9B4C"/><path d="M743 102 L749 96 H797 V118 H743 Z" fill="#7C98AE"/><path d="M744 103 L750 97 H796 V118 H744 Z" fill="#F4F4F4"/><path d="M745 103.5 L750.5 98 H796 V118 H745 Z" fill="#FF9B4C"/><path d="M796 102 L802 96 H876 V118 H796 Z" fill="#7C98AE"/><path d="M797 103 L803 97 H875 V118 H797 Z" fill="#F4F4F4"/><path d="M798 103.5 L803.5 98 H875 V118 H798 Z" fill="#FF9B4C"/><path d="M875 102 L881 96 H939 V118 H875 Z" fill="#7C98AE"/><path d="M876 103 L882 97 H938 V118 H876 Z" fill="#F4F4F4"/><path d="M877 103.5 L882.5 98 H938 V118 H877 Z" fill="#FF9B4C"/><path d="M938 102 L944 96 H1045 V118 H938 Z" fill="#7C98AE"/><path d="M939 103 L945 97 H1044 V118 H939 Z" fill="#F4F4F4"/><path d="M940 103.5 L945.5 98 H1044 V118 H940 Z" fill="#FF9B4C"/><path d="M1044 102 L1050 96 H1095 V118 H1044 Z" fill="#7C98AE"/><path d="M1045 103 L1051 97 H1094 V118 H1045 Z" fill="#F4F4F4"/><path d="M1046 103.5 L1051.5 98 H1094 V118 H1046 Z" fill="#FF9B4C"/></svg>
<div class="tt" style="left:17px;top:101px;color:#fff;font-weight:bold"><span style="display:inline-block;width:3px">I</span><span style="display:inline-block;width:7px">n</span><span style="display:inline-block;width:4px">f</span><span style="display:inline-block;width:7px">o</span><span style="display:inline-block;width:5px">r</span><span style="display:inline-block;width:11px">m</span><span style="display:inline-block;width:7px">a</span><span style="display:inline-block;width:4px">t</span><span style="display:inline-block;width:3px">i</span><span style="display:inline-block;width:7px">o</span><span style="display:inline-block;width:7px">n</span></div>
<div class="tt" style="left:107px;top:101px;color:#000"><span style="display:inline-block;width:9.2px">C</span><span style="display:inline-block;width:7.2px">u</span><span style="display:inline-block;width:6.2px">s</span><span style="display:inline-block;width:3.2px">t</span><span style="display:inline-block;width:7.2px">o</span><span style="display:inline-block;width:10.2px">m</span><span style="display:inline-block;width:7.2px">e</span><span style="display:inline-block;width:4.2px">r</span></div>
<div class="tt" style="left:189px;top:101px;color:#000"><span style="display:inline-block;width:9.2px">C</span><span style="display:inline-block;width:7.2px">o</span><span style="display:inline-block;width:7.2px">n</span><span style="display:inline-block;width:3.2px">t</span><span style="display:inline-block;width:7.2px">a</span><span style="display:inline-block;width:6.2px">c</span><span style="display:inline-block;width:3.2px">t</span><span style="display:inline-block;width:6.2px">s</span></div>
<div class="tt" style="left:265px;top:101px;color:#000"><span style="display:inline-block;width:8.2px">E</span><span style="display:inline-block;width:6.2px">v</span><span style="display:inline-block;width:7.2px">e</span><span style="display:inline-block;width:7.2px">n</span><span style="display:inline-block;width:3.2px">t</span></div>
<div class="tt" style="left:322px;top:101px;color:#000"><span style="display:inline-block;width:9.2px">D</span><span style="display:inline-block;width:7.2px">a</span><span style="display:inline-block;width:3.2px">t</span><span style="display:inline-block;width:7.2px">e</span><span style="display:inline-block;width:6.2px">s</span></div>
<div class="tt" style="left:382px;top:101px;color:#000"><span style="display:inline-block;width:8.2px">S</span><span style="display:inline-block;width:6.2px">c</span><span style="display:inline-block;width:7.2px">h</span><span style="display:inline-block;width:7.2px">e</span><span style="display:inline-block;width:7.2px">d</span><span style="display:inline-block;width:7.2px">u</span><span style="display:inline-block;width:3.2px">l</span><span style="display:inline-block;width:7.2px">e</span><span style="display:inline-block;width:6.2px">s</span></div>
<div class="tt" style="left:468px;top:101px;color:#000"><span style="display:inline-block;width:8.2px">S</span><span style="display:inline-block;width:7.2px">h</span><span style="display:inline-block;width:3.2px">i</span><span style="display:inline-block;width:7.2px">p</span><span style="display:inline-block;width:7.2px">p</span><span style="display:inline-block;width:3.2px">i</span><span style="display:inline-block;width:7.2px">n</span><span style="display:inline-block;width:7.2px">g</span></div>
<div class="tt" style="left:544px;top:101px;color:#000"><span style="display:inline-block;width:9.2px">R</span><span style="display:inline-block;width:7.2px">e</span><span style="display:inline-block;width:3.2px">t</span><span style="display:inline-block;width:7.2px">u</span><span style="display:inline-block;width:4.2px">r</span><span style="display:inline-block;width:7.2px">n</span></div>
<div class="tt" style="left:608px;top:101px;color:#000"><span style="display:inline-block;width:8.2px">P</span><span style="display:inline-block;width:7.2px">a</span><span style="display:inline-block;width:6.2px">y</span><span style="display:inline-block;width:10.2px">m</span><span style="display:inline-block;width:7.2px">e</span><span style="display:inline-block;width:7.2px">n</span><span style="display:inline-block;width:3.2px">t</span></div>
<div class="tt" style="left:683px;top:101px;color:#000"><span style="display:inline-block;width:9.2px">D</span><span style="display:inline-block;width:7.2px">e</span><span style="display:inline-block;width:3.2px">f</span><span style="display:inline-block;width:7.2px">a</span><span style="display:inline-block;width:7.2px">u</span><span style="display:inline-block;width:3.2px">l</span><span style="display:inline-block;width:3.2px">t</span></div>
<div class="tt" style="left:749px;top:101px;color:#000"><span style="display:inline-block;width:9.2px">C</span><span style="display:inline-block;width:7.2px">o</span><span style="display:inline-block;width:6.2px">s</span><span style="display:inline-block;width:3.2px">t</span></div>
<div class="tt" style="left:802px;top:101px;color:#000"><span style="display:inline-block;width:8.2px">S</span><span style="display:inline-block;width:7.2px">u</span><span style="display:inline-block;width:7.2px">b</span><span style="display:inline-block;width:3.2px">&nbsp;</span><span style="display:inline-block;width:7.2px">T</span><span style="display:inline-block;width:7.2px">o</span><span style="display:inline-block;width:3.2px">t</span><span style="display:inline-block;width:7.2px">a</span><span style="display:inline-block;width:3.2px">l</span></div>
<div class="tt" style="left:881px;top:101px;color:#000"><span style="display:inline-block;width:8.2px">S</span><span style="display:inline-block;width:3.2px">t</span><span style="display:inline-block;width:7.2px">a</span><span style="display:inline-block;width:3.2px">t</span><span style="display:inline-block;width:7.2px">u</span><span style="display:inline-block;width:6.2px">s</span></div>
<div class="tt" style="left:944px;top:101px;color:#000"><span style="display:inline-block;width:7.2px">F</span><span style="display:inline-block;width:3.2px">l</span><span style="display:inline-block;width:7.2px">a</span><span style="display:inline-block;width:3.2px">t</span><span style="display:inline-block;width:3.2px">&nbsp;</span><span style="display:inline-block;width:9.2px">D</span><span style="display:inline-block;width:3.2px">i</span><span style="display:inline-block;width:6.2px">s</span><span style="display:inline-block;width:6.2px">c</span><span style="display:inline-block;width:7.2px">o</span><span style="display:inline-block;width:7.2px">u</span><span style="display:inline-block;width:7.2px">n</span><span style="display:inline-block;width:3.2px">t</span><span style="display:inline-block;width:6.2px">s</span></div>
<div class="tt" style="left:1050px;top:101px;color:#000"><span style="display:inline-block;width:9.2px">U</span><span style="display:inline-block;width:9.2px">D</span><span style="display:inline-block;width:7.2px">F</span></div>
<div class="l" style="left:17px;top:131px;"><span style="display:inline-block;width:9.2px">N</span><span style="display:inline-block;width:7.2px">u</span><span style="display:inline-block;width:10.2px">m</span><span style="display:inline-block;width:7.2px">b</span><span style="display:inline-block;width:7.2px">e</span><span style="display:inline-block;width:4.2px">r</span></div>
<div class="f " style="left:99px;top:128px;width:100px;height:24px;line-height:25px;"><span style="display:inline-block;width:9.2px">O</span><span style="display:inline-block;width:9.2px">R</span><span style="display:inline-block;width:9.2px">D</span><span style="display:inline-block;width:4.2px">-</span><span style="display:inline-block;width:7.2px">1</span><span style="display:inline-block;width:7.2px">4</span><span style="display:inline-block;width:7.2px">4</span><span style="display:inline-block;width:7.2px">3</span></div>
<div class="l" style="left:212px;top:131px;"><span style="display:inline-block;width:8.2px">V</span><span style="display:inline-block;width:7.2px">e</span><span style="display:inline-block;width:4.2px">r</span><span style="display:inline-block;width:6.2px">s</span><span style="display:inline-block;width:3.2px">i</span><span style="display:inline-block;width:7.2px">o</span><span style="display:inline-block;width:7.2px">n</span></div>
<div class="f " style="left:264px;top:128px;width:88px;height:24px;line-height:25px;"><span style="display:inline-block;width:7.2px">1</span></div>
<svg class="a" style="left:333px;top:130px" width="20" height="18"><defs><radialGradient id="mg" cx="0.35" cy="0.65" r="0.75"><stop offset="0" stop-color="#FFFFFF"/><stop offset="0.45" stop-color="#D8F4FF"/><stop offset="1" stop-color="#98C8E8"/></radialGradient></defs><path d="M11.3 9.3 L16.6 13.9" stroke="#3A3A6A" stroke-width="3.6" stroke-linecap="round"/><path d="M11.6 8.8 L16.9 13.4" stroke="#F8A030" stroke-width="2.2" stroke-linecap="round"/><circle cx="7.8" cy="5.6" r="4.6" fill="url(#mg)" stroke="#50507A" stroke-width="1"/></svg>
<div class="l" style="left:17px;top:159px;"><span style="display:inline-block;width:9.2px">D</span><span style="display:inline-block;width:7.2px">e</span><span style="display:inline-block;width:6.2px">s</span><span style="display:inline-block;width:6.2px">c</span><span style="display:inline-block;width:4.2px">r</span><span style="display:inline-block;width:3.2px">i</span><span style="display:inline-block;width:7.2px">p</span><span style="display:inline-block;width:3.2px">t</span><span style="display:inline-block;width:3.2px">i</span><span style="display:inline-block;width:7.2px">o</span><span style="display:inline-block;width:7.2px">n</span></div>
<div class="f fw" style="left:99px;top:156px;width:255px;height:24px;line-height:25px;"></div>
<div class="l" style="left:17px;top:187px;"><span style="display:inline-block;width:9.2px">D</span><span style="display:inline-block;width:7.2px">a</span><span style="display:inline-block;width:3.2px">t</span><span style="display:inline-block;width:7.2px">e</span><span style="display:inline-block;width:3.2px">&nbsp;</span><span style="display:inline-block;width:9.2px">C</span><span style="display:inline-block;width:4.2px">r</span><span style="display:inline-block;width:7.2px">e</span><span style="display:inline-block;width:7.2px">a</span><span style="display:inline-block;width:3.2px">t</span><span style="display:inline-block;width:7.2px">e</span><span style="display:inline-block;width:7.2px">d</span></div>
<div class="f " style="left:99px;top:184px;width:100px;height:24px;line-height:25px;"><span style="display:inline-block;width:7.2px">1</span><span style="display:inline-block;width:7.2px">9</span><span style="display:inline-block;width:3.2px">/</span><span style="display:inline-block;width:7.2px">0</span><span style="display:inline-block;width:7.2px">5</span><span style="display:inline-block;width:3.2px">/</span><span style="display:inline-block;width:7.2px">2</span><span style="display:inline-block;width:7.2px">0</span><span style="display:inline-block;width:7.2px">1</span><span style="display:inline-block;width:7.2px">7</span></div>
<div class="l" style="left:212px;top:187px;"><span style="display:inline-block;width:8.2px">P</span><span style="display:inline-block;width:4.2px">r</span><span style="display:inline-block;width:7.2px">o</span><span style="display:inline-block;width:3.2px">j</span><span style="display:inline-block;width:7.2px">e</span><span style="display:inline-block;width:6.2px">c</span><span style="display:inline-block;width:3.2px">t</span></div>
<div class="f fw" style="left:264px;top:184px;width:88px;height:24px;line-height:25px;"><span style="display:inline-block;width:9.2px">O</span><span style="display:inline-block;width:9.2px">R</span><span style="display:inline-block;width:9.2px">D</span><span style="display:inline-block;width:4.2px">-</span><span style="display:inline-block;width:7.2px">1</span><span style="display:inline-block;width:7.2px">4</span><span style="display:inline-block;width:7.2px">4</span><span style="display:inline-block;width:7.2px">3</span></div>
<svg class="a" style="left:333px;top:186px" width="20" height="18"><defs><radialGradient id="mg" cx="0.35" cy="0.65" r="0.75"><stop offset="0" stop-color="#FFFFFF"/><stop offset="0.45" stop-color="#D8F4FF"/><stop offset="1" stop-color="#98C8E8"/></radialGradient></defs><path d="M11.3 9.3 L16.6 13.9" stroke="#3A3A6A" stroke-width="3.6" stroke-linecap="round"/><path d="M11.6 8.8 L16.9 13.4" stroke="#F8A030" stroke-width="2.2" stroke-linecap="round"/><circle cx="7.8" cy="5.6" r="4.6" fill="url(#mg)" stroke="#50507A" stroke-width="1"/></svg>
<div class="l" style="left:17px;top:215px;"><span style="display:inline-block;width:8.2px">S</span><span style="display:inline-block;width:3.2px">i</span><span style="display:inline-block;width:3.2px">t</span><span style="display:inline-block;width:7.2px">e</span></div>
<div class="f " style="left:99px;top:212px;width:100px;height:24px;line-height:25px;"><span style="display:inline-block;width:8.2px">S</span><span style="display:inline-block;width:8.2px">A</span><span style="display:inline-block;width:9.2px">N</span><span style="display:inline-block;width:7.2px">F</span><span style="display:inline-block;width:9.2px">R</span><span style="display:inline-block;width:8.2px">A</span><span style="display:inline-block;width:9.2px">N</span><span style="display:inline-block;width:9.2px">C</span><span style="display:inline-block;width:3.2px">I</span><span style="display:inline-block;width:8.2px">S</span><span style="display:inline-block;width:9.2px">C</span><span style="display:inline-block;width:9.2px">O</span></div>
<div class="l" style="left:212px;top:215px;"><span style="display:inline-block;width:8.2px">S</span><span style="display:inline-block;width:7.2px">u</span><span style="display:inline-block;width:7.2px">b</span><span style="display:inline-block;width:3.2px">&nbsp;</span><span style="display:inline-block;width:9.2px">O</span><span style="display:inline-block;width:4.2px">r</span><span style="display:inline-block;width:7.2px">d</span><span style="display:inline-block;width:7.2px">e</span><span style="display:inline-block;width:4.2px">r</span><span style="display:inline-block;width:6.2px">s</span></div>
<div class="f " style="left:289px;top:212px;width:66px;height:24px;line-height:25px;"><span style="display:inline-block;width:7.2px">0</span></div>
<div class="l" style="left:17px;top:243px;"><span style="display:inline-block;width:8.2px">P</span><span style="display:inline-block;width:4.2px">r</span><span style="display:inline-block;width:7.2px">o</span><span style="display:inline-block;width:3.2px">j</span><span style="display:inline-block;width:7.2px">e</span><span style="display:inline-block;width:6.2px">c</span><span style="display:inline-block;width:3.2px">t</span><span style="display:inline-block;width:3.2px">&nbsp;</span><span style="display:inline-block;width:10.2px">M</span><span style="display:inline-block;width:7.2px">g</span><span style="display:inline-block;width:4.2px">r</span><span style="display:inline-block;width:3.2px">.</span></div>
<div class="f fb" style="left:99px;top:240px;width:255px;height:24px;line-height:25px;"></div><div class="a" style="left:334px;top:241px;width:19px;height:22px;border-left:1px solid #7A8EA4;background:linear-gradient(#F4F8FC,#FFFFFF 30%,#C4D8EE)"></div><svg class="a" style="left:334px;top:240px" width="20" height="24"><path d="M5 10 H15 L10 15 Z" fill="#222"/></svg><svg class="a" style="left:316px;top:242px" width="20" height="18"><defs><radialGradient id="mg" cx="0.35" cy="0.65" r="0.75"><stop offset="0" stop-color="#FFFFFF"/><stop offset="0.45" stop-color="#D8F4FF"/><stop offset="1" stop-color="#98C8E8"/></radialGradient></defs><path d="M11.3 9.3 L16.6 13.9" stroke="#3A3A6A" stroke-width="3.6" stroke-linecap="round"/><path d="M11.6 8.8 L16.9 13.4" stroke="#F8A030" stroke-width="2.2" stroke-linecap="round"/><circle cx="7.8" cy="5.6" r="4.6" fill="url(#mg)" stroke="#50507A" stroke-width="1"/></svg>
<div class="l" style="left:17px;top:271px;"><span style="display:inline-block;width:8.2px">S</span><span style="display:inline-block;width:7.2px">a</span><span style="display:inline-block;width:3.2px">l</span><span style="display:inline-block;width:7.2px">e</span><span style="display:inline-block;width:6.2px">s</span><span style="display:inline-block;width:3.2px">&nbsp;</span><span style="display:inline-block;width:8.2px">P</span><span style="display:inline-block;width:7.2px">e</span><span style="display:inline-block;width:4.2px">r</span><span style="display:inline-block;width:6.2px">s</span><span style="display:inline-block;width:7.2px">o</span><span style="display:inline-block;width:7.2px">n</span></div>
<div class="f fb" style="left:99px;top:268px;width:255px;height:24px;line-height:25px;"></div><div class="a" style="left:334px;top:269px;width:19px;height:22px;border-left:1px solid #7A8EA4;background:linear-gradient(#F4F8FC,#FFFFFF 30%,#C4D8EE)"></div><svg class="a" style="left:334px;top:268px" width="20" height="24"><path d="M5 10 H15 L10 15 Z" fill="#222"/></svg><svg class="a" style="left:316px;top:270px" width="20" height="18"><defs><radialGradient id="mg" cx="0.35" cy="0.65" r="0.75"><stop offset="0" stop-color="#FFFFFF"/><stop offset="0.45" stop-color="#D8F4FF"/><stop offset="1" stop-color="#98C8E8"/></radialGradient></defs><path d="M11.3 9.3 L16.6 13.9" stroke="#3A3A6A" stroke-width="3.6" stroke-linecap="round"/><path d="M11.6 8.8 L16.9 13.4" stroke="#F8A030" stroke-width="2.2" stroke-linecap="round"/><circle cx="7.8" cy="5.6" r="4.6" fill="url(#mg)" stroke="#50507A" stroke-width="1"/></svg>
<div class="l" style="left:17px;top:299px;"><span style="display:inline-block;width:7.2px">L</span><span style="display:inline-block;width:7.2px">a</span><span style="display:inline-block;width:7.2px">b</span><span style="display:inline-block;width:7.2px">o</span><span style="display:inline-block;width:4.2px">r</span><span style="display:inline-block;width:3.2px">&nbsp;</span><span style="display:inline-block;width:8.2px">P</span><span style="display:inline-block;width:3.2px">l</span><span style="display:inline-block;width:7.2px">a</span><span style="display:inline-block;width:7.2px">n</span><span style="display:inline-block;width:7.2px">n</span><span style="display:inline-block;width:7.2px">e</span><span style="display:inline-block;width:4.2px">r</span></div>
<div class="f fw" style="left:99px;top:296px;width:255px;height:24px;line-height:25px;"><span style="display:inline-block;width:10.2px">M</span><span style="display:inline-block;width:8.2px">A</span><span style="display:inline-block;width:9.2px">N</span><span style="display:inline-block;width:7.2px">T</span><span style="display:inline-block;width:9.2px">R</span><span style="display:inline-block;width:8.2px">A</span><span style="display:inline-block;width:3.2px">&nbsp;</span><span style="display:inline-block;width:9.2px">U</span><span style="display:inline-block;width:8.2px">B</span><span style="display:inline-block;width:8.2px">S</span></div>
<svg class="a" style="left:333px;top:298px" width="20" height="18"><defs><radialGradient id="mg" cx="0.35" cy="0.65" r="0.75"><stop offset="0" stop-color="#FFFFFF"/><stop offset="0.45" stop-color="#D8F4FF"/><stop offset="1" stop-color="#98C8E8"/></radialGradient></defs><path d="M11.3 9.3 L16.6 13.9" stroke="#3A3A6A" stroke-width="3.6" stroke-linecap="round"/><path d="M11.6 8.8 L16.9 13.4" stroke="#F8A030" stroke-width="2.2" stroke-linecap="round"/><circle cx="7.8" cy="5.6" r="4.6" fill="url(#mg)" stroke="#50507A" stroke-width="1"/></svg>
<div class="a" style="left:366px;top:131px;width:215px;height:98px;border:1px solid #A0A0A0"></div>
<div class="l" style="left:370px;top:126px;padding:0 2px;background:#fff;font-weight:bold;color:#111">Charge Duration</div>
<div class="l" style="left:369px;top:143px;"><span style="display:inline-block;width:8.2px">S</span><span style="display:inline-block;width:3.2px">t</span><span style="display:inline-block;width:7.2px">a</span><span style="display:inline-block;width:4.2px">r</span><span style="display:inline-block;width:3.2px">t</span><span style="display:inline-block;width:3.2px">&nbsp;</span><span style="display:inline-block;width:9.2px">D</span><span style="display:inline-block;width:7.2px">a</span><span style="display:inline-block;width:3.2px">t</span><span style="display:inline-block;width:7.2px">e</span><span style="display:inline-block;width:3.2px">/</span><span style="display:inline-block;width:7.2px">T</span><span style="display:inline-block;width:3.2px">i</span><span style="display:inline-block;width:10.2px">m</span><span style="display:inline-block;width:7.2px">e</span></div>
<div class="f " style="left:458px;top:141px;width:120px;height:24px;line-height:25px;"><span style="display:inline-block;width:7.2px">2</span><span style="display:inline-block;width:7.2px">0</span><span style="display:inline-block;width:3.2px">/</span><span style="display:inline-block;width:7.2px">0</span><span style="display:inline-block;width:7.2px">5</span><span style="display:inline-block;width:3.2px">/</span><span style="display:inline-block;width:7.2px">2</span><span style="display:inline-block;width:7.2px">0</span><span style="display:inline-block;width:7.2px">1</span><span style="display:inline-block;width:7.2px">7</span></div>
<div class="l" style="left:369px;top:172px;"><span style="display:inline-block;width:8.2px">E</span><span style="display:inline-block;width:7.2px">n</span><span style="display:inline-block;width:7.2px">d</span><span style="display:inline-block;width:3.2px">&nbsp;</span><span style="display:inline-block;width:9.2px">D</span><span style="display:inline-block;width:7.2px">a</span><span style="display:inline-block;width:3.2px">t</span><span style="display:inline-block;width:7.2px">e</span><span style="display:inline-block;width:3.2px">/</span><span style="display:inline-block;width:7.2px">T</span><span style="display:inline-block;width:3.2px">i</span><span style="display:inline-block;width:10.2px">m</span><span style="display:inline-block;width:7.2px">e</span></div>
<div class="f " style="left:458px;top:170px;width:120px;height:24px;line-height:25px;"><span style="display:inline-block;width:7.2px">2</span><span style="display:inline-block;width:7.2px">0</span><span style="display:inline-block;width:3.2px">/</span><span style="display:inline-block;width:7.2px">0</span><span style="display:inline-block;width:7.2px">6</span><span style="display:inline-block;width:3.2px">/</span><span style="display:inline-block;width:7.2px">2</span><span style="display:inline-block;width:7.2px">0</span><span style="display:inline-block;width:7.2px">1</span><span style="display:inline-block;width:7.2px">7</span></div>
<div class="l" style="left:369px;top:201px;"><span style="display:inline-block;width:9.2px">D</span><span style="display:inline-block;width:7.2px">u</span><span style="display:inline-block;width:4.2px">r</span><span style="display:inline-block;width:7.2px">a</span><span style="display:inline-block;width:3.2px">t</span><span style="display:inline-block;width:3.2px">i</span><span style="display:inline-block;width:7.2px">o</span><span style="display:inline-block;width:7.2px">n</span></div>
<div class="f " style="left:458px;top:199px;width:85px;height:24px;line-height:25px;"><span style="display:inline-block;width:7.2px">3</span><span style="display:inline-block;width:7.2px">2</span><span style="display:inline-block;width:7.2px">d</span></div>
<div class="l" style="left:588px;top:146px;"><span style="display:inline-block;width:9.2px">C</span><span style="display:inline-block;width:7.2px">o</span><span style="display:inline-block;width:7.2px">n</span><span style="display:inline-block;width:6.2px">v</span><span style="display:inline-block;width:3.2px">.</span><span style="display:inline-block;width:3.2px">&nbsp;</span><span style="display:inline-block;width:9.2px">D</span><span style="display:inline-block;width:7.2px">a</span><span style="display:inline-block;width:3.2px">t</span><span style="display:inline-block;width:7.2px">e</span></div>
<div class="f " style="left:655px;top:141px;width:90px;height:24px;line-height:25px;"></div>
<div class="cb" style="left:589px;top:175px;background:linear-gradient(135deg,#FFFFFF 20%,#F8B480)"></div><svg class="a" style="left:589px;top:175px" width="13" height="13"><path d="M4 5.5 V9.6" stroke="#111" stroke-width="2"/><path d="M4.5 9.5 L10 3.3" stroke="#111" stroke-width="1.3"/></svg>
<div class="l" style="left:606px;top:175px;"><span style="display:inline-block;width:8.2px">S</span><span style="display:inline-block;width:7.2px">h</span><span style="display:inline-block;width:7.2px">o</span><span style="display:inline-block;width:9.2px">w</span><span style="display:inline-block;width:3.2px">&nbsp;</span><span style="display:inline-block;width:8.2px">S</span><span style="display:inline-block;width:7.2px">u</span><span style="display:inline-block;width:7.2px">g</span><span style="display:inline-block;width:7.2px">g</span><span style="display:inline-block;width:7.2px">e</span><span style="display:inline-block;width:6.2px">s</span><span style="display:inline-block;width:3.2px">t</span><span style="display:inline-block;width:3.2px">i</span><span style="display:inline-block;width:7.2px">o</span><span style="display:inline-block;width:7.2px">n</span><span style="display:inline-block;width:6.2px">s</span></div>
<div class="cb" style="left:589px;top:199px;background:linear-gradient(135deg,#FFFFFF 20%,#F8B480)"></div>
<div class="l" style="left:606px;top:199px;"><span style="display:inline-block;width:8.2px">E</span><span style="display:inline-block;width:6.2px">v</span><span style="display:inline-block;width:7.2px">e</span><span style="display:inline-block;width:7.2px">n</span><span style="display:inline-block;width:3.2px">t</span><span style="display:inline-block;width:3.2px">&nbsp;</span><span style="display:inline-block;width:8.2px">P</span><span style="display:inline-block;width:4.2px">r</span><span style="display:inline-block;width:3.2px">i</span><span style="display:inline-block;width:6.2px">c</span><span style="display:inline-block;width:3.2px">i</span><span style="display:inline-block;width:7.2px">n</span><span style="display:inline-block;width:7.2px">g</span></div>
<div class="a" style="left:752px;top:148px;width:290px;height:83px;border:1px solid #778899;border-top-color:#5A7FC8;border-left-color:#5A7FC8;background:#C6DBF1"></div><div class="a" style="left:753px;top:149px;width:288px;height:1px;background:#fff"></div><div class="a" style="left:754px;top:152px;width:284px;height:75px;border:1px solid #A8A8A8;background:#fff;box-shadow:1px 1px 0 #fff"></div>
<div class="a" style="left:761px;top:154px;width:269px;height:69px;border:2px solid #6E7A84;background:#EEEEEE"></div>
<svg class="a" style="left:1010px;top:156px" width="20" height="18"><defs><radialGradient id="mg" cx="0.35" cy="0.65" r="0.75"><stop offset="0" stop-color="#FFFFFF"/><stop offset="0.45" stop-color="#D8F4FF"/><stop offset="1" stop-color="#98C8E8"/></radialGradient></defs><path d="M11.3 9.3 L16.6 13.9" stroke="#3A3A6A" stroke-width="3.6" stroke-linecap="round"/><path d="M11.6 8.8 L16.9 13.4" stroke="#F8A030" stroke-width="2.2" stroke-linecap="round"/><circle cx="7.8" cy="5.6" r="4.6" fill="url(#mg)" stroke="#50507A" stroke-width="1"/></svg>
<svg class="a" style="left:0;top:0" width="1188" height="160"><path d="M754 132 L760 126 H845 V148 H754 Z" fill="#5A7FC8"/><path d="M755 133 L761 127 H844 V149 H755 Z" fill="#F4F4F4"/><path d="M756 133.5 L761.5 128 H844 V149 H756 Z" fill="#C44D2E"/><path d="M844 132 L850 126 H964 V148 H844 Z" fill="#7C98AE"/><path d="M845 133 L851 127 H963 V148 H845 Z" fill="#F4F4F4"/><path d="M846 133.5 L851.5 128 H963 V148 H846 Z" fill="#FF9B4C"/></svg>
<div class="tt" style="left:759px;top:131px;color:#fff;font-weight:bold">Comments</div>
<div class="tt" style="left:850px;top:131px;color:#000"><span style="display:inline-block;width:7.2px">L</span><span style="display:inline-block;width:7.2px">a</span><span style="display:inline-block;width:7.2px">b</span><span style="display:inline-block;width:7.2px">o</span><span style="display:inline-block;width:4.2px">r</span><span style="display:inline-block;width:9.2px">C</span><span style="display:inline-block;width:7.2px">o</span><span style="display:inline-block;width:10.2px">m</span><span style="display:inline-block;width:10.2px">m</span><span style="display:inline-block;width:7.2px">e</span><span style="display:inline-block;width:7.2px">n</span><span style="display:inline-block;width:3.2px">t</span><span style="display:inline-block;width:6.2px">s</span></div>
<div class="l" style="left:362px;top:242px;"><span style="display:inline-block;width:9.2px">C</span><span style="display:inline-block;width:7.2px">u</span><span style="display:inline-block;width:6.2px">s</span><span style="display:inline-block;width:3.2px">t</span><span style="display:inline-block;width:7.2px">o</span><span style="display:inline-block;width:10.2px">m</span><span style="display:inline-block;width:7.2px">e</span><span style="display:inline-block;width:4.2px">r</span></div>
<div class="f " style="left:421px;top:236px;width:160px;height:24px;line-height:25px;"><span style="display:inline-block;width:8.2px">K</span><span style="display:inline-block;width:8.2px">S</span><span style="display:inline-block;width:8.2px">B</span></div>
<svg class="a" style="left:560px;top:238px" width="20" height="18"><defs><radialGradient id="mg" cx="0.35" cy="0.65" r="0.75"><stop offset="0" stop-color="#FFFFFF"/><stop offset="0.45" stop-color="#D8F4FF"/><stop offset="1" stop-color="#98C8E8"/></radialGradient></defs><path d="M11.3 9.3 L16.6 13.9" stroke="#3A3A6A" stroke-width="3.6" stroke-linecap="round"/><path d="M11.6 8.8 L16.9 13.4" stroke="#F8A030" stroke-width="2.2" stroke-linecap="round"/><circle cx="7.8" cy="5.6" r="4.6" fill="url(#mg)" stroke="#50507A" stroke-width="1"/></svg>
<div class="l" style="left:362px;top:270px;"><span style="display:inline-block;width:9.2px">C</span><span style="display:inline-block;width:7.2px">o</span><span style="display:inline-block;width:7.2px">n</span><span style="display:inline-block;width:3.2px">t</span><span style="display:inline-block;width:7.2px">a</span><span style="display:inline-block;width:6.2px">c</span><span style="display:inline-block;width:3.2px">t</span></div>
<div class="f " style="left:421px;top:265px;width:160px;height:24px;line-height:25px;"><span style="display:inline-block;width:8.2px">S</span><span style="display:inline-block;width:3.2px">t</span><span style="display:inline-block;width:7.2px">e</span><span style="display:inline-block;width:6.2px">v</span><span style="display:inline-block;width:7.2px">e</span><span style="display:inline-block;width:7.2px">n</span><span style="display:inline-block;width:3.2px">&nbsp;</span><span style="display:inline-block;width:9.2px">H</span><span style="display:inline-block;width:6.2px">y</span><span style="display:inline-block;width:7.2px">d</span><span style="display:inline-block;width:7.2px">e</span></div>
<svg class="a" style="left:560px;top:267px" width="20" height="18"><defs><radialGradient id="mg" cx="0.35" cy="0.65" r="0.75"><stop offset="0" stop-color="#FFFFFF"/><stop offset="0.45" stop-color="#D8F4FF"/><stop offset="1" stop-color="#98C8E8"/></radialGradient></defs><path d="M11.3 9.3 L16.6 13.9" stroke="#3A3A6A" stroke-width="3.6" stroke-linecap="round"/><path d="M11.6 8.8 L16.9 13.4" stroke="#F8A030" stroke-width="2.2" stroke-linecap="round"/><circle cx="7.8" cy="5.6" r="4.6" fill="url(#mg)" stroke="#50507A" stroke-width="1"/></svg>
<div class="l" style="left:362px;top:299px;"><span style="display:inline-block;width:9.2px">C</span><span style="display:inline-block;width:7.2px">o</span><span style="display:inline-block;width:7.2px">n</span><span style="display:inline-block;width:3.2px">t</span><span style="display:inline-block;width:7.2px">a</span><span style="display:inline-block;width:6.2px">c</span><span style="display:inline-block;width:3.2px">t</span><span style="display:inline-block;width:3.2px">&nbsp;</span><span style="display:inline-block;width:7.2px">T</span><span style="display:inline-block;width:7.2px">e</span><span style="display:inline-block;width:3.2px">l</span><span style="display:inline-block;width:3.2px">&nbsp;</span><span style="display:inline-block;width:7.2px">#</span></div>
<div class="f " style="left:451px;top:294px;width:129px;height:24px;line-height:25px;"></div>
<div class="l" style="left:587px;top:241px;"><span style="display:inline-block;width:8.2px">B</span><span style="display:inline-block;width:3.2px">i</span><span style="display:inline-block;width:3.2px">l</span><span style="display:inline-block;width:3.2px">l</span><span style="display:inline-block;width:3.2px">&nbsp;</span><span style="display:inline-block;width:7.2px">T</span><span style="display:inline-block;width:7.2px">o</span></div>
<div class="f " style="left:654px;top:236px;width:160px;height:24px;line-height:25px;"><span style="display:inline-block;width:8.2px">K</span><span style="display:inline-block;width:8.2px">S</span><span style="display:inline-block;width:8.2px">B</span></div>
<svg class="a" style="left:793px;top:238px" width="20" height="18"><defs><radialGradient id="mg" cx="0.35" cy="0.65" r="0.75"><stop offset="0" stop-color="#FFFFFF"/><stop offset="0.45" stop-color="#D8F4FF"/><stop offset="1" stop-color="#98C8E8"/></radialGradient></defs><path d="M11.3 9.3 L16.6 13.9" stroke="#3A3A6A" stroke-width="3.6" stroke-linecap="round"/><path d="M11.6 8.8 L16.9 13.4" stroke="#F8A030" stroke-width="2.2" stroke-linecap="round"/><circle cx="7.8" cy="5.6" r="4.6" fill="url(#mg)" stroke="#50507A" stroke-width="1"/></svg>
<div class="l" style="left:587px;top:270px;"><span style="display:inline-block;width:8.2px">B</span><span style="display:inline-block;width:3.2px">i</span><span style="display:inline-block;width:3.2px">l</span><span style="display:inline-block;width:3.2px">l</span><span style="display:inline-block;width:3.2px">&nbsp;</span><span style="display:inline-block;width:9.2px">C</span><span style="display:inline-block;width:7.2px">o</span><span style="display:inline-block;width:7.2px">n</span><span style="display:inline-block;width:3.2px">t</span><span style="display:inline-block;width:7.2px">a</span><span style="display:inline-block;width:6.2px">c</span><span style="display:inline-block;width:3.2px">t</span></div>
<div class="f " style="left:654px;top:265px;width:160px;height:24px;line-height:25px;"><span style="display:inline-block;width:8.2px">S</span><span style="display:inline-block;width:3.2px">t</span><span style="display:inline-block;width:7.2px">e</span><span style="display:inline-block;width:6.2px">v</span><span style="display:inline-block;width:7.2px">e</span><span style="display:inline-block;width:7.2px">n</span><span style="display:inline-block;width:3.2px">&nbsp;</span><span style="display:inline-block;width:9.2px">H</span><span style="display:inline-block;width:6.2px">y</span><span style="display:inline-block;width:7.2px">d</span><span style="display:inline-block;width:7.2px">e</span></div>
<svg class="a" style="left:793px;top:267px" width="20" height="18"><defs><radialGradient id="mg" cx="0.35" cy="0.65" r="0.75"><stop offset="0" stop-color="#FFFFFF"/><stop offset="0.45" stop-color="#D8F4FF"/><stop offset="1" stop-color="#98C8E8"/></radialGradient></defs><path d="M11.3 9.3 L16.6 13.9" stroke="#3A3A6A" stroke-width="3.6" stroke-linecap="round"/><path d="M11.6 8.8 L16.9 13.4" stroke="#F8A030" stroke-width="2.2" stroke-linecap="round"/><circle cx="7.8" cy="5.6" r="4.6" fill="url(#mg)" stroke="#50507A" stroke-width="1"/></svg>
<div class="l" style="left:587px;top:299px;"><span style="display:inline-block;width:7.2px">L</span><span style="display:inline-block;width:7.2px">a</span><span style="display:inline-block;width:7.2px">n</span><span style="display:inline-block;width:7.2px">g</span><span style="display:inline-block;width:7.2px">u</span><span style="display:inline-block;width:7.2px">a</span><span style="display:inline-block;width:7.2px">g</span><span style="display:inline-block;width:7.2px">e</span></div>
<div class="f " style="left:654px;top:294px;width:90px;height:24px;line-height:25px;"></div>
<svg class="a" style="left:723px;top:296px" width="20" height="18"><defs><radialGradient id="mg" cx="0.35" cy="0.65" r="0.75"><stop offset="0" stop-color="#FFFFFF"/><stop offset="0.45" stop-color="#D8F4FF"/><stop offset="1" stop-color="#98C8E8"/></radialGradient></defs><path d="M11.3 9.3 L16.6 13.9" stroke="#3A3A6A" stroke-width="3.6" stroke-linecap="round"/><path d="M11.6 8.8 L16.9 13.4" stroke="#F8A030" stroke-width="2.2" stroke-linecap="round"/><circle cx="7.8" cy="5.6" r="4.6" fill="url(#mg)" stroke="#50507A" stroke-width="1"/></svg>
<div class="l" style="left:826px;top:248px;"><span style="display:inline-block;width:9.2px">D</span><span style="display:inline-block;width:7.2px">o</span><span style="display:inline-block;width:6.2px">c</span><span style="display:inline-block;width:7.2px">u</span><span style="display:inline-block;width:10.2px">m</span><span style="display:inline-block;width:7.2px">e</span><span style="display:inline-block;width:7.2px">n</span><span style="display:inline-block;width:3.2px">t</span><span style="display:inline-block;width:3.2px">&nbsp;</span><span style="display:inline-block;width:7.2px">F</span><span style="display:inline-block;width:7.2px">o</span><span style="display:inline-block;width:3.2px">l</span><span style="display:inline-block;width:7.2px">d</span><span style="display:inline-block;width:7.2px">e</span><span style="display:inline-block;width:4.2px">r</span><span style="display:inline-block;width:3.2px">:</span></div>
<div class="a" style="left:826px;top:264px;width:216px;height:49px;border:2px solid #7A8894;background:#EEEEEE"></div>
<div class="a" style="left:1014px;top:240px;width:49px;height:23px;border:1px solid #A8A8A8;background:#fff"></div>
<div class="a" style="left:1024px;top:242px;width:30px;height:20px;border:1px solid #6E6868;border-radius:2px;background:#fff;font-size:10.5px;line-height:19px;text-align:center;color:#000;letter-spacing:-0.2px;-webkit-text-stroke:0.2px #000">Reset</div>
<div class="a" style="left:8px;top:356px;width:1172px;height:315px;border:1px solid #778899;border-top-color:#5A7FC8;border-left-color:#5A7FC8;background:#C6DBF1"></div>
<div class="a" style="left:9px;top:357px;width:1170px;height:1px;background:#fff"></div>
<div class="a" style="left:10px;top:360px;width:1166px;height:307px;border:1px solid #A8A8A8;background:#fff;box-shadow:1px 1px 0 #fff"></div>
<svg class="a" style="left:0;top:320px" width="1188" height="40"><path d="M10 20 L16 14 H78 V36 H10 Z" fill="#5A7FC8"/><path d="M11 21 L17 15 H77 V37 H11 Z" fill="#F4F4F4"/><path d="M12 21.5 L17.5 16 H77 V37 H12 Z" fill="#C44D2E"/><path d="M77 20 L83 14 H135 V36 H77 Z" fill="#7C98AE"/><path d="M78 21 L84 15 H134 V36 H78 Z" fill="#F4F4F4"/><path d="M79 21.5 L84.5 16 H134 V36 H79 Z" fill="#FF9B4C"/></svg>
<div class="tt" style="left:15px;top:339px;color:#fff;font-weight:bold">Item(s)</div>
<div class="tt" style="left:83px;top:339px;color:#000"><span style="display:inline-block;width:7.2px">L</span><span style="display:inline-block;width:7.2px">a</span><span style="display:inline-block;width:7.2px">b</span><span style="display:inline-block;width:7.2px">o</span><span style="display:inline-block;width:4.2px">r</span></div>
<div class="a" style="left:12px;top:362px;width:1162px;height:303px;border:1px solid #7A8A9A;background:#fff"></div>
<div class="a" style="left:13px;top:363px;width:1160px;height:20px;background:#FF7040"></div>
<div class="th" style="left:13px;width:14px;">C</div>
<div class="th" style="left:28px;width:19px;">L</div>
<div class="th" style="left:48px;width:14px;">T</div>
<div class="th" style="left:63px;width:14px;">S</div>
<div class="th" style="left:78px;width:74px;">Status</div>
<div class="th" style="left:153px;width:44px;">Action</div>
<div class="th" style="left:198px;width:99px;">Product ID</div>
<div class="th" style="left:298px;width:259px;">Description</div>
<div class="th" style="left:558px;width:54px;">Duration</div>
<div class="th" style="left:613px;width:29px;">Qty</div>
<div class="th" style="left:643px;width:59px;">Unit Price</div>
<div class="th" style="left:703px;width:54px;">Discount</div>
<div class="th" style="left:758px;width:74px;">Total Cost</div>
<div class="th" style="left:833px;width:59px;">Net Disc</div>
<div class="th" style="left:893px;width:59px;">Net Each</div>
<div class="th" style="left:953px;width:74px;">Amount</div>
<div class="th" style="left:1028px;width:39px;">Unit</div>
<div class="th" style="left:1068px;width:29px;">DIW</div>
<div class="th" style="left:1098px;width:49px;">DIM</div>
<div class="th" style="left:1148px;width:26px;"></div>
<div class="a" style="left:13px;top:383px;width:1160px;height:19px;background:#FF9B4C;border-bottom:1px solid #B8743C"></div>
<div class="a" style="left:27px;top:383px;width:1px;height:18px;background:#B8743C"></div>
<div class="a" style="left:47px;top:383px;width:1px;height:18px;background:#B8743C"></div>
<div class="a" style="left:62px;top:383px;width:1px;height:18px;background:#B8743C"></div>
<div class="a" style="left:77px;top:383px;width:1px;height:18px;background:#B8743C"></div>
<div class="a" style="left:152px;top:383px;width:1px;height:18px;background:#B8743C"></div>
<div class="a" style="left:197px;top:383px;width:1px;height:18px;background:#B8743C"></div>
<div class="a" style="left:297px;top:383px;width:1px;height:18px;background:#B8743C"></div>
<div class="a" style="left:557px;top:383px;width:1px;height:18px;background:#B8743C"></div>
<div class="a" style="left:612px;top:383px;width:1px;height:18px;background:#B8743C"></div>
<div class="a" style="left:642px;top:383px;width:1px;height:18px;background:#B8743C"></div>
<div class="a" style="left:702px;top:383px;width:1px;height:18px;background:#B8743C"></div>
<div class="a" style="left:757px;top:383px;width:1px;height:18px;background:#B8743C"></div>
<div class="a" style="left:832px;top:383px;width:1px;height:18px;background:#B8743C"></div>
<div class="a" style="left:892px;top:383px;width:1px;height:18px;background:#B8743C"></div>
<div class="a" style="left:952px;top:383px;width:1px;height:18px;background:#B8743C"></div>
<div class="a" style="left:1027px;top:383px;width:1px;height:18px;background:#B8743C"></div>
<div class="a" style="left:1067px;top:383px;width:1px;height:18px;background:#B8743C"></div>
<div class="a" style="left:1097px;top:383px;width:1px;height:18px;background:#B8743C"></div>
<div class="a" style="left:1147px;top:383px;width:1px;height:18px;background:#B8743C"></div>
<div class="td" style="left:79px;width:73px;">Not&nbsp;Available</div>
<div class="td" style="left:154px;width:43px;">Rent</div>
<div class="td" style="left:199px;width:98px;">CRANE#1</div>
<div class="td" style="left:299px;width:258px;">&nbsp;&nbsp;CRANE#1</div>
<div class="td" style="left:559px;width:53px;">32d</div>
<div class="td" style="left:613px;width:27px;text-align:right;">1</div>
<div class="td" style="left:643px;width:57px;text-align:right;">0.00</div>
<div class="td" style="left:703px;width:52px;text-align:right;">0.00</div>
<div class="td" style="left:758px;width:72px;text-align:right;">0.00</div>
<div class="td" style="left:833px;width:57px;text-align:right;">0.00</div>
<div class="td" style="left:893px;width:57px;text-align:right;">0.00</div>
<div class="td" style="left:953px;width:72px;text-align:right;">0.00</div>
<div class="td" style="left:1029px;width:38px;">Day</div>
<div class="td" style="left:1068px;width:27px;text-align:right;">7.00</div>
<div class="td" style="left:1098px;width:47px;text-align:right;">28.00</div>
<div class="td" style="left:1149px;width:24px;">20/0</div>
<div class="cb" style="left:14px"></div>
<div class="cb" style="left:31px"></div>
<div class="cb" style="left:49px"></div>
<svg class="a" style="left:49px;top:386px" width="13" height="13"><path d="M4 5.5 V9.6" stroke="#111" stroke-width="2"/><path d="M4.5 9.5 L10 3.3" stroke="#111" stroke-width="1.3"/></svg>
<div class="cb" style="left:64px"></div>
<div class="a" style="left:13px;top:647px;width:1160px;height:16px;background:#EEEEEE;border-top:1px solid #7A8A9A;border-bottom:1px solid #7A8A9A"></div>
<div class="a" style="left:13px;top:663px;width:1144px;height:1px;background:#C6DBF1"></div>
<div class="a" style="left:13px;top:648px;width:15px;height:14px;background:#EEEEEE;border-top:1px solid #fff;border-left:1px solid #fff"></div>
<svg class="a" style="left:13px;top:647px" width="16" height="16"><path d="M10.2 5 V13 L5.8 9 Z" fill="#222"/></svg>
<div class="a" style="left:1156px;top:647px;width:16px;height:16px;background:#EEEEEE;border:1px solid #7A8A9A;border-top:none;box-shadow:inset 1px 0 0 #fff"></div>
<div class="a" style="left:1172px;top:647px;width:1px;height:16px;background:#fff"></div>
<svg class="a" style="left:1156px;top:647px" width="16" height="16"><path d="M6.8 5 V13 L11.2 9 Z" fill="#222"/></svg>
<div class="a" style="left:28px;top:647px;width:425px;height:16px;border:1px solid #FFC400;background:linear-gradient(#E08850 0,#E08850 1px,#F2C49C 1px,#E8A068)"></div>
<svg class="a" style="left:236px;top:650px" width="10" height="12"><path d="M2.5 1 V9 M4.5 1 V9 M6.5 1 V9" stroke="#8A7A8A" stroke-width="1"/><path d="M3.5 2 V10 M5.5 2 V10 M7.5 2 V10" stroke="#F8D8B8" stroke-width="1"/></svg>
<div class="tot" style="left:70px;top:678px;font-size:14px;letter-spacing:0.5px;">Items</div>
<div class="f " style="left:120px;top:673px;width:100px;height:24px;line-height:25px;"></div>
<div class="tot" style="left:235px;top:678px;font-size:14px;letter-spacing:0.5px;">Labor</div>
<div class="f " style="left:287px;top:673px;width:100px;height:24px;line-height:25px;"></div>
<div class="tot" style="left:446px;top:678px;font-size:14px;letter-spacing:0.5px;">Sub Total</div>
<div class="f " style="left:525px;top:673px;width:100px;height:24px;line-height:25px;"></div>
<div class="tot" style="left:636px;top:678px;font-size:14px;letter-spacing:0.5px;">Tax</div>
<div class="f " style="left:670px;top:673px;width:100px;height:24px;line-height:25px;"></div>
<div class="a" style="left:813px;top:673px;width:89px;height:23px;border:1px solid #C0C0C0;background:#fff;font-weight:bold;font-size:14px;line-height:23px;padding-top:1px;text-align:center;color:#222;letter-spacing:0.5px">Total</div>
<div class="f " style="left:906px;top:673px;width:100px;height:24px;line-height:25px;font-weight:bold;font-size:14px;color:#111;text-indent:0;line-height:22px"><span style="display:inline-block;width:8px">0</span><span style="display:inline-block;width:4px">.</span><span style="display:inline-block;width:8px">0</span><span style="display:inline-block;width:8px">0</span></div>
<div class="a" style="left:8px;top:707px;width:1172px;height:24px;border:1px solid #C8C8C8;border-top-color:#C4CCD4;border-left-color:#C4CCD4;box-shadow:inset 1px 1px 0 #808080;background:#fff"></div>
</body></html>
